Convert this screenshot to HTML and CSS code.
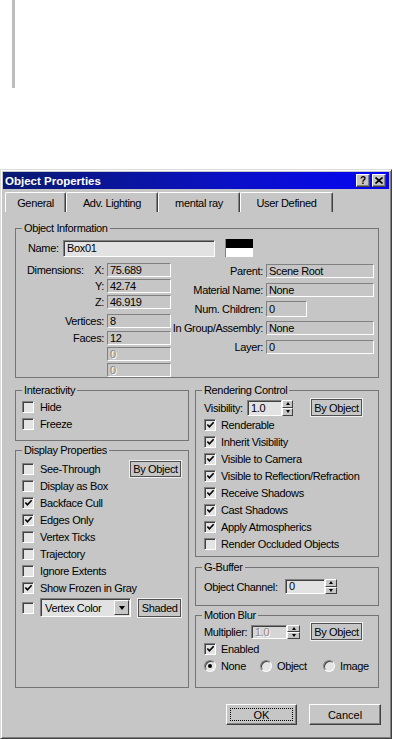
FILE: index.html
```html
<!DOCTYPE html>
<html lang="en">
<head>
    <meta charset="UTF-8">
    <meta name="viewport" content="width=device-width, initial-scale=1.0">
    <title>Object Properties</title>
    <link rel="stylesheet" href="styles.css">
</head>
<body>
    <div class="desk">
        <div class="desk-bar"></div>
    </div>

    <div class="dialog">
        <div class="titlebar">
            <span class="title">Object Properties</span>
            <span class="tb-btns">
                <span class="tb-btn">?</span>
                <span class="tb-btn">
                    <svg width="8" height="7" viewBox="0 0 8 7">
                        <path d="M0.5 0.5L7.5 6.5M7.5 0.5L0.5 6.5" stroke="#000" stroke-width="1.6"/>
                    </svg>
                </span>
            </span>
        </div>

        <div class="tabs">
            <span class="tab tab-general">General</span>
            <span class="tab tab-lighting">Adv. Lighting</span>
            <span class="tab tab-mental">mental ray</span>
            <span class="tab tab-user">User Defined</span>
        </div>

        <div class="page">
            <!-- Object Information -->
            <div class="group info">
                <span class="group-title">Object Information</span>
                <div class="name-row">
                    <span class="name-label">Name:</span>
                    <span class="edit name-input">Box01</span>
                    <span class="swatch"></span>
                </div>
                <div class="info-cols">
                    <div class="dims">
                        <div class="dim-row">
                            <span class="dim-head">Dimensions:</span>
                            <span class="dim-axis">X:</span>
                            <span class="fld dim-fld">75.689</span>
                        </div>
                        <div class="dim-row">
                            <span class="dim-label">Y:</span>
                            <span class="fld dim-fld">42.74</span>
                        </div>
                        <div class="dim-row">
                            <span class="dim-label">Z:</span>
                            <span class="fld dim-fld">46.919</span>
                        </div>
                        <div class="dim-row sep">
                            <span class="dim-label">Vertices:</span>
                            <span class="fld dim-fld">8</span>
                        </div>
                        <div class="dim-row sep-small">
                            <span class="dim-label">Faces:</span>
                            <span class="fld dim-fld">12</span>
                        </div>
                        <div class="dim-row">
                            <span class="dim-label"></span>
                            <span class="fld dim-fld off">0</span>
                        </div>
                        <div class="dim-row">
                            <span class="dim-label"></span>
                            <span class="fld dim-fld off">0</span>
                        </div>
                    </div>
                    <div class="props">
                        <div class="prop-row">
                            <span class="prop-label">Parent:</span>
                            <span class="fld prop-fld">Scene Root</span>
                        </div>
                        <div class="prop-row">
                            <span class="prop-label">Material Name:</span>
                            <span class="fld prop-fld">None</span>
                        </div>
                        <div class="prop-row">
                            <span class="prop-label">Num. Children:</span>
                            <span class="fld prop-fld short">0</span>
                        </div>
                        <div class="prop-row">
                            <span class="prop-label">In Group/Assembly:</span>
                            <span class="fld prop-fld">None</span>
                        </div>
                        <div class="prop-row">
                            <span class="prop-label">Layer:</span>
                            <span class="fld prop-fld">0</span>
                        </div>
                    </div>
                </div>
            </div>

            <div class="columns">
                <div class="col-left">
                    <!-- Interactivity -->
                    <div class="group interact">
                        <span class="group-title">Interactivity</span>
                        <div class="check-row"><span class="cb"></span>Hide</div>
                        <div class="check-row"><span class="cb"></span>Freeze</div>
                    </div>

                    <!-- Display Properties -->
                    <div class="group display">
                        <span class="group-title">Display Properties</span>
                        <div class="check-row">
                            <span class="cb"></span>See-Through
                            <span class="tog-btn see-btn">By Object</span>
                        </div>
                        <div class="check-row"><span class="cb"></span>Display as Box</div>
                        <div class="check-row"><span class="cb on"><svg width="10" height="10" viewBox="0 0 10 10"><path d="M1.5 4.5L3.8 7L8.5 2" fill="none" stroke="#000" stroke-width="1.8"/></svg></span>Backface Cull</div>
                        <div class="check-row"><span class="cb on"><svg width="10" height="10" viewBox="0 0 10 10"><path d="M1.5 4.5L3.8 7L8.5 2" fill="none" stroke="#000" stroke-width="1.8"/></svg></span>Edges Only</div>
                        <div class="check-row"><span class="cb"></span>Vertex Ticks</div>
                        <div class="check-row"><span class="cb"></span>Trajectory</div>
                        <div class="check-row"><span class="cb"></span>Ignore Extents</div>
                        <div class="check-row"><span class="cb on"><svg width="10" height="10" viewBox="0 0 10 10"><path d="M1.5 4.5L3.8 7L8.5 2" fill="none" stroke="#000" stroke-width="1.8"/></svg></span>Show Frozen in Gray</div>
                        <div class="check-row last">
                            <span class="cb"></span>
                            <span class="select">
                                <span class="select-text">Vertex Color</span>
                                <span class="select-arrow"></span>
                            </span>
                            <span class="tog-btn shaded-btn">Shaded</span>
                        </div>
                    </div>
                </div>

                <div class="col-right">
                    <!-- Rendering Control -->
                    <div class="group render">
                        <span class="group-title">Rendering Control</span>
                        <div class="spin-row">
                            <span class="vis-label">Visibility:</span>
                            <span class="edit vis-fld">1.0</span>
                            <span class="spinner vis-spin"><span class="up"></span><span class="down"></span></span>
                            <span class="tog-btn obj-btn">By Object</span>
                        </div>
                        <div class="check-row"><span class="cb on"><svg width="10" height="10" viewBox="0 0 10 10"><path d="M1.5 4.5L3.8 7L8.5 2" fill="none" stroke="#000" stroke-width="1.8"/></svg></span>Renderable</div>
                        <div class="check-row"><span class="cb on"><svg width="10" height="10" viewBox="0 0 10 10"><path d="M1.5 4.5L3.8 7L8.5 2" fill="none" stroke="#000" stroke-width="1.8"/></svg></span>Inherit Visibility</div>
                        <div class="check-row"><span class="cb on"><svg width="10" height="10" viewBox="0 0 10 10"><path d="M1.5 4.5L3.8 7L8.5 2" fill="none" stroke="#000" stroke-width="1.8"/></svg></span>Visible to Camera</div>
                        <div class="check-row"><span class="cb on"><svg width="10" height="10" viewBox="0 0 10 10"><path d="M1.5 4.5L3.8 7L8.5 2" fill="none" stroke="#000" stroke-width="1.8"/></svg></span>Visible to Reflection/Refraction</div>
                        <div class="check-row"><span class="cb on"><svg width="10" height="10" viewBox="0 0 10 10"><path d="M1.5 4.5L3.8 7L8.5 2" fill="none" stroke="#000" stroke-width="1.8"/></svg></span>Receive Shadows</div>
                        <div class="check-row"><span class="cb on"><svg width="10" height="10" viewBox="0 0 10 10"><path d="M1.5 4.5L3.8 7L8.5 2" fill="none" stroke="#000" stroke-width="1.8"/></svg></span>Cast Shadows</div>
                        <div class="check-row"><span class="cb on"><svg width="10" height="10" viewBox="0 0 10 10"><path d="M1.5 4.5L3.8 7L8.5 2" fill="none" stroke="#000" stroke-width="1.8"/></svg></span>Apply Atmospherics</div>
                        <div class="check-row"><span class="cb"></span>Render Occluded Objects</div>
                    </div>

                    <!-- G-Buffer -->
                    <div class="group gbuffer">
                        <span class="group-title">G-Buffer</span>
                        <div class="spin-row">
                            <span class="chan-label">Object Channel:</span>
                            <span class="edit chan-fld">0</span>
                            <span class="spinner chan-spin"><span class="up"></span><span class="down"></span></span>
                        </div>
                    </div>

                    <!-- Motion Blur -->
                    <div class="group motion">
                        <span class="group-title">Motion Blur</span>
                        <div class="spin-row">
                            <span class="mult-label">Multiplier:</span>
                            <span class="edit mult-fld off">1.0</span>
                            <span class="spinner mult-spin"><span class="up"></span><span class="down"></span></span>
                            <span class="tog-btn mult-btn">By Object</span>
                        </div>
                        <div class="check-row"><span class="cb on"><svg width="10" height="10" viewBox="0 0 10 10"><path d="M1.5 4.5L3.8 7L8.5 2" fill="none" stroke="#000" stroke-width="1.8"/></svg></span>Enabled</div>
                        <div class="radio-row">
                            <span class="radio-item r-none"><span class="rb on"></span>None</span>
                            <span class="radio-item r-object"><span class="rb"></span>Object</span>
                            <span class="radio-item"><span class="rb"></span>Image</span>
                        </div>
                    </div>
                </div>
            </div>

            <div class="actions">
                <button class="btn ok"><span>OK</span></button>
                <button class="btn cancel">Cancel</button>
            </div>
        </div>
    </div>
</body>
</html>
```

FILE: styles.css
```css
* {
    margin: 0;
    padding: 0;
    box-sizing: border-box;
}

body {
    font-family: "Liberation Sans", Arial, sans-serif;
    font-size: 11px;
    letter-spacing: -0.35px;
    color: #000;
    background-color: #fff;
}

/* area above the dialog */
.desk {
    height: 169px;
}

.desk-bar {
    margin-left: 12px;
    width: 3px;
    height: 88px;
    background-color: #bdbdbd;
}

/* dialog frame */
.dialog {
    width: 392px;
    height: 570px;
    background-color: #c6c6c6;
    border: 1px solid;
    border-color: #dcdcdc #404040 #404040 #dcdcdc;
    box-shadow: inset 1px 1px 0 #fff, inset -1px -1px 0 #808080;
    padding: 2px;
}

.titlebar {
    height: 17px;
    display: flex;
    align-items: center;
    justify-content: space-between;
    padding: 0 3px 0 2px;
    background: linear-gradient(90deg, #0a1a70, #0a10c8 60%, #0606f4);
}

.title {
    color: #fff;
    font-weight: bold;
    font-size: 11.5px;
    letter-spacing: 0;
}

.tb-btns {
    display: flex;
    gap: 2px;
}

.tb-btn {
    width: 14px;
    height: 13px;
    display: flex;
    align-items: center;
    justify-content: center;
    background-color: #c6c6c6;
    border: 1px solid;
    border-color: #fff #404040 #404040 #fff;
    box-shadow: inset -1px -1px 0 #808080;
    font-weight: bold;
    font-size: 10px;
    letter-spacing: 0;
}

/* tabs */
.tabs {
    display: flex;
    height: 20px;
    margin-top: 3px;
    padding-left: 2px;
}

.tab {
    height: 20px;
    display: flex;
    align-items: center;
    justify-content: center;
    border-top: 1px solid #fff;
    border-left: 1px solid #fff;
    border-right: 1px solid #404040;
    box-shadow: inset -1px 0 0 #808080;
    border-radius: 2px 2px 0 0;
}

.tab-general { width: 61px; }
.tab-lighting { width: 92px; }
.tab-mental { width: 82px; }
.tab-user { width: 93px; }

.page {
    padding: 16px 0 0 12px;
}

/* group boxes */
.group {
    position: relative;
    border: 1px solid #747474;
}

.group-title {
    position: absolute;
    top: -8px;
    left: 6px;
    padding: 0 2px;
    line-height: 14px;
    background-color: #c6c6c6;
}

/* fields */
.fld {
    height: 14px;
    background-color: #c6c6c6;
    border: 1px solid;
    border-color: #808080 #fff #fff #808080;
    padding-left: 2px;
    line-height: 12px;
    white-space: nowrap;
}

.edit {
    background-color: #e2e2e2;
    border: 1px solid;
    border-color: #808080 #fff #fff #808080;
    box-shadow: inset 1px 1px 0 #404040;
    padding-left: 3px;
}

.off {
    color: #8a8a8a;
    text-shadow: 1px 1px 0 #fff;
}

/* object information */
.info {
    width: 364px;
    height: 150px;
    padding: 10px 0 0 12px;
}

.name-row {
    display: flex;
    align-items: flex-end;
    height: 18px;
}

.name-label {
    width: 35px;
    line-height: 17px;
}

.name-input {
    width: 152px;
    height: 17px;
    line-height: 15px;
}

.swatch {
    width: 28px;
    height: 18px;
    margin-left: 10px;
    background: linear-gradient(#000 50%, #fff 50%);
    border-left: 1px solid #808080;
}

.info-cols {
    display: flex;
    margin-top: 6px;
    margin-left: -1px;
}

.dims {
    width: 144px;
    display: flex;
    flex-direction: column;
}

.dim-row {
    display: flex;
    height: 14px;
    margin-top: 2px;
    line-height: 14px;
}

.dim-row:first-child {
    margin-top: 0;
}

.dim-row.sep {
    margin-top: 5px;
}

.dim-row.sep-small {
    margin-top: 3px;
}

.dim-head {
    width: 66px;
}

.dim-axis {
    width: 14px;
    text-align: right;
    padding-right: 3px;
}

.dim-label {
    width: 80px;
    text-align: right;
    padding-right: 3px;
}

.dim-fld {
    width: 64px;
}

.props {
    display: flex;
    flex-direction: column;
    gap: 5px;
    padding-top: 1px;
}

.prop-row {
    display: flex;
    align-items: center;
    gap: 3px;
    height: 14px;
}

.prop-label {
    width: 92px;
    text-align: right;
    line-height: 14px;
    white-space: nowrap;
}

.prop-fld {
    width: 108px;
}

.prop-fld.short {
    width: 41px;
    height: 16px;
    line-height: 14px;
}

/* lower columns */
.columns {
    display: flex;
    gap: 6px;
    margin-top: 12px;
}

.col-left {
    width: 174px;
    display: flex;
    flex-direction: column;
    gap: 9px;
}

.col-right {
    width: 184px;
    display: flex;
    flex-direction: column;
}

.interact {
    height: 51px;
    padding: 7px 7px 0 6px;
}

.display {
    height: 238px;
    padding: 9px 7px 0 6px;
}

.render {
    height: 167px;
    padding: 8px 0 0 8px;
}

.gbuffer {
    height: 39px;
    margin-top: 10px;
    padding: 10px 0 0 8px;
}

.motion {
    height: 73px;
    margin-top: 9px;
    padding: 7px 0 0 8px;
}

/* checkboxes and radios */
.check-row {
    display: flex;
    align-items: center;
    gap: 6px;
    height: 17px;
    white-space: nowrap;
}

.col-right .check-row {
    gap: 5px;
}

.cb {
    width: 12px;
    height: 12px;
    flex: none;
    display: flex;
    align-items: center;
    justify-content: center;
    background-color: #e4e4e4;
    border: 1px solid;
    border-color: #808080 #fff #fff #808080;
    box-shadow: inset 1px 1px 0 #404040;
}

.cb svg {
    margin: 1px 0 0 1px;
}

.check-row.last {
    height: 19px;
    margin-top: 2px;
}

.radio-row {
    display: flex;
    align-items: center;
    height: 17px;
}

.radio-item {
    display: flex;
    align-items: center;
    gap: 5px;
}

.r-none { width: 56px; }
.r-object { width: 63px; }

.rb {
    width: 12px;
    height: 12px;
    flex: none;
    display: flex;
    align-items: center;
    justify-content: center;
    border-radius: 50%;
    background-color: #e4e4e4;
    border: 1px solid;
    border-color: #808080 #fff #fff #808080;
    box-shadow: inset 1px 1px 0 #404040;
}

.rb.on::after {
    content: "";
    width: 4px;
    height: 4px;
    border-radius: 50%;
    background-color: #000;
}

/* buttons */
.tog-btn {
    display: flex;
    align-items: center;
    justify-content: center;
    background-color: #c6c6c6;
    border: 1px solid #505050;
    box-shadow: 0 0 0 1px #f0f0f0;
    white-space: nowrap;
}

.see-btn {
    width: 51px;
    height: 16px;
    margin-left: auto;
}

.shaded-btn {
    width: 43px;
    height: 18px;
    margin-left: 1px;
}

.obj-btn,
.mult-btn {
    width: 51px;
    height: 17px;
}

.obj-btn {
    margin-left: 18px;
}

.mult-btn {
    margin-left: 11px;
}

.select {
    width: 92px;
    height: 19px;
    display: flex;
    background-color: #e2e2e2;
    border: 1px solid;
    border-color: #808080 #fff #fff #808080;
    box-shadow: inset 1px 1px 0 #404040;
}

.select-text {
    flex: 1;
    padding: 1px 0 0 4px;
    line-height: 16px;
}

.select-arrow {
    width: 15px;
    margin: 1px;
    display: flex;
    align-items: center;
    justify-content: center;
    background-color: #c6c6c6;
    border: 1px solid;
    border-color: #fff #404040 #404040 #fff;
}

.select-arrow::after {
    content: "";
    border-left: 3.5px solid transparent;
    border-right: 3.5px solid transparent;
    border-top: 4px solid #000;
}

/* spinners */
.spin-row {
    display: flex;
    align-items: center;
    height: 17px;
    white-space: nowrap;
}

.vis-label { width: 43px; }
.chan-label { width: 81px; }
.mult-label { width: 47px; }

.vis-fld {
    width: 35px;
    height: 16px;
    line-height: 14px;
}

.chan-fld {
    width: 40px;
    height: 15px;
    line-height: 13px;
}

.mult-fld {
    width: 36px;
    height: 14px;
    line-height: 12px;
    background-color: #d6d6d6;
}

.spinner {
    display: flex;
    flex-direction: column;
}

.vis-spin { width: 11px; height: 16px; }
.chan-spin { width: 12px; height: 15px; }
.mult-spin { width: 13px; height: 14px; }

.spinner span {
    flex: 1;
    display: flex;
    align-items: center;
    justify-content: center;
    background-color: #c6c6c6;
    border: 1px solid;
    border-color: #fff #404040 #404040 #fff;
}

.spinner .up::after {
    content: "";
    border-left: 2.5px solid transparent;
    border-right: 2.5px solid transparent;
    border-bottom: 3px solid #000;
}

.spinner .down::after {
    content: "";
    border-left: 2.5px solid transparent;
    border-right: 2.5px solid transparent;
    border-top: 3px solid #000;
}

/* dialog buttons */
.actions {
    display: flex;
    justify-content: flex-end;
    gap: 12px;
    margin-top: 16px;
    padding-right: 8px;
}

.btn {
    height: 21px;
    display: flex;
    align-items: center;
    justify-content: center;
    font: inherit;
    color: #000;
    background-color: #c6c6c6;
    border: 1px solid;
    border-color: #fff #404040 #404040 #fff;
    box-shadow: inset -1px -1px 0 #808080;
}

.ok {
    width: 71px;
    padding: 3px;
}

.ok span {
    flex: 1;
    height: 100%;
    display: flex;
    align-items: center;
    justify-content: center;
    border: 1px dotted #000;
}

.cancel {
    width: 72px;
}
```
